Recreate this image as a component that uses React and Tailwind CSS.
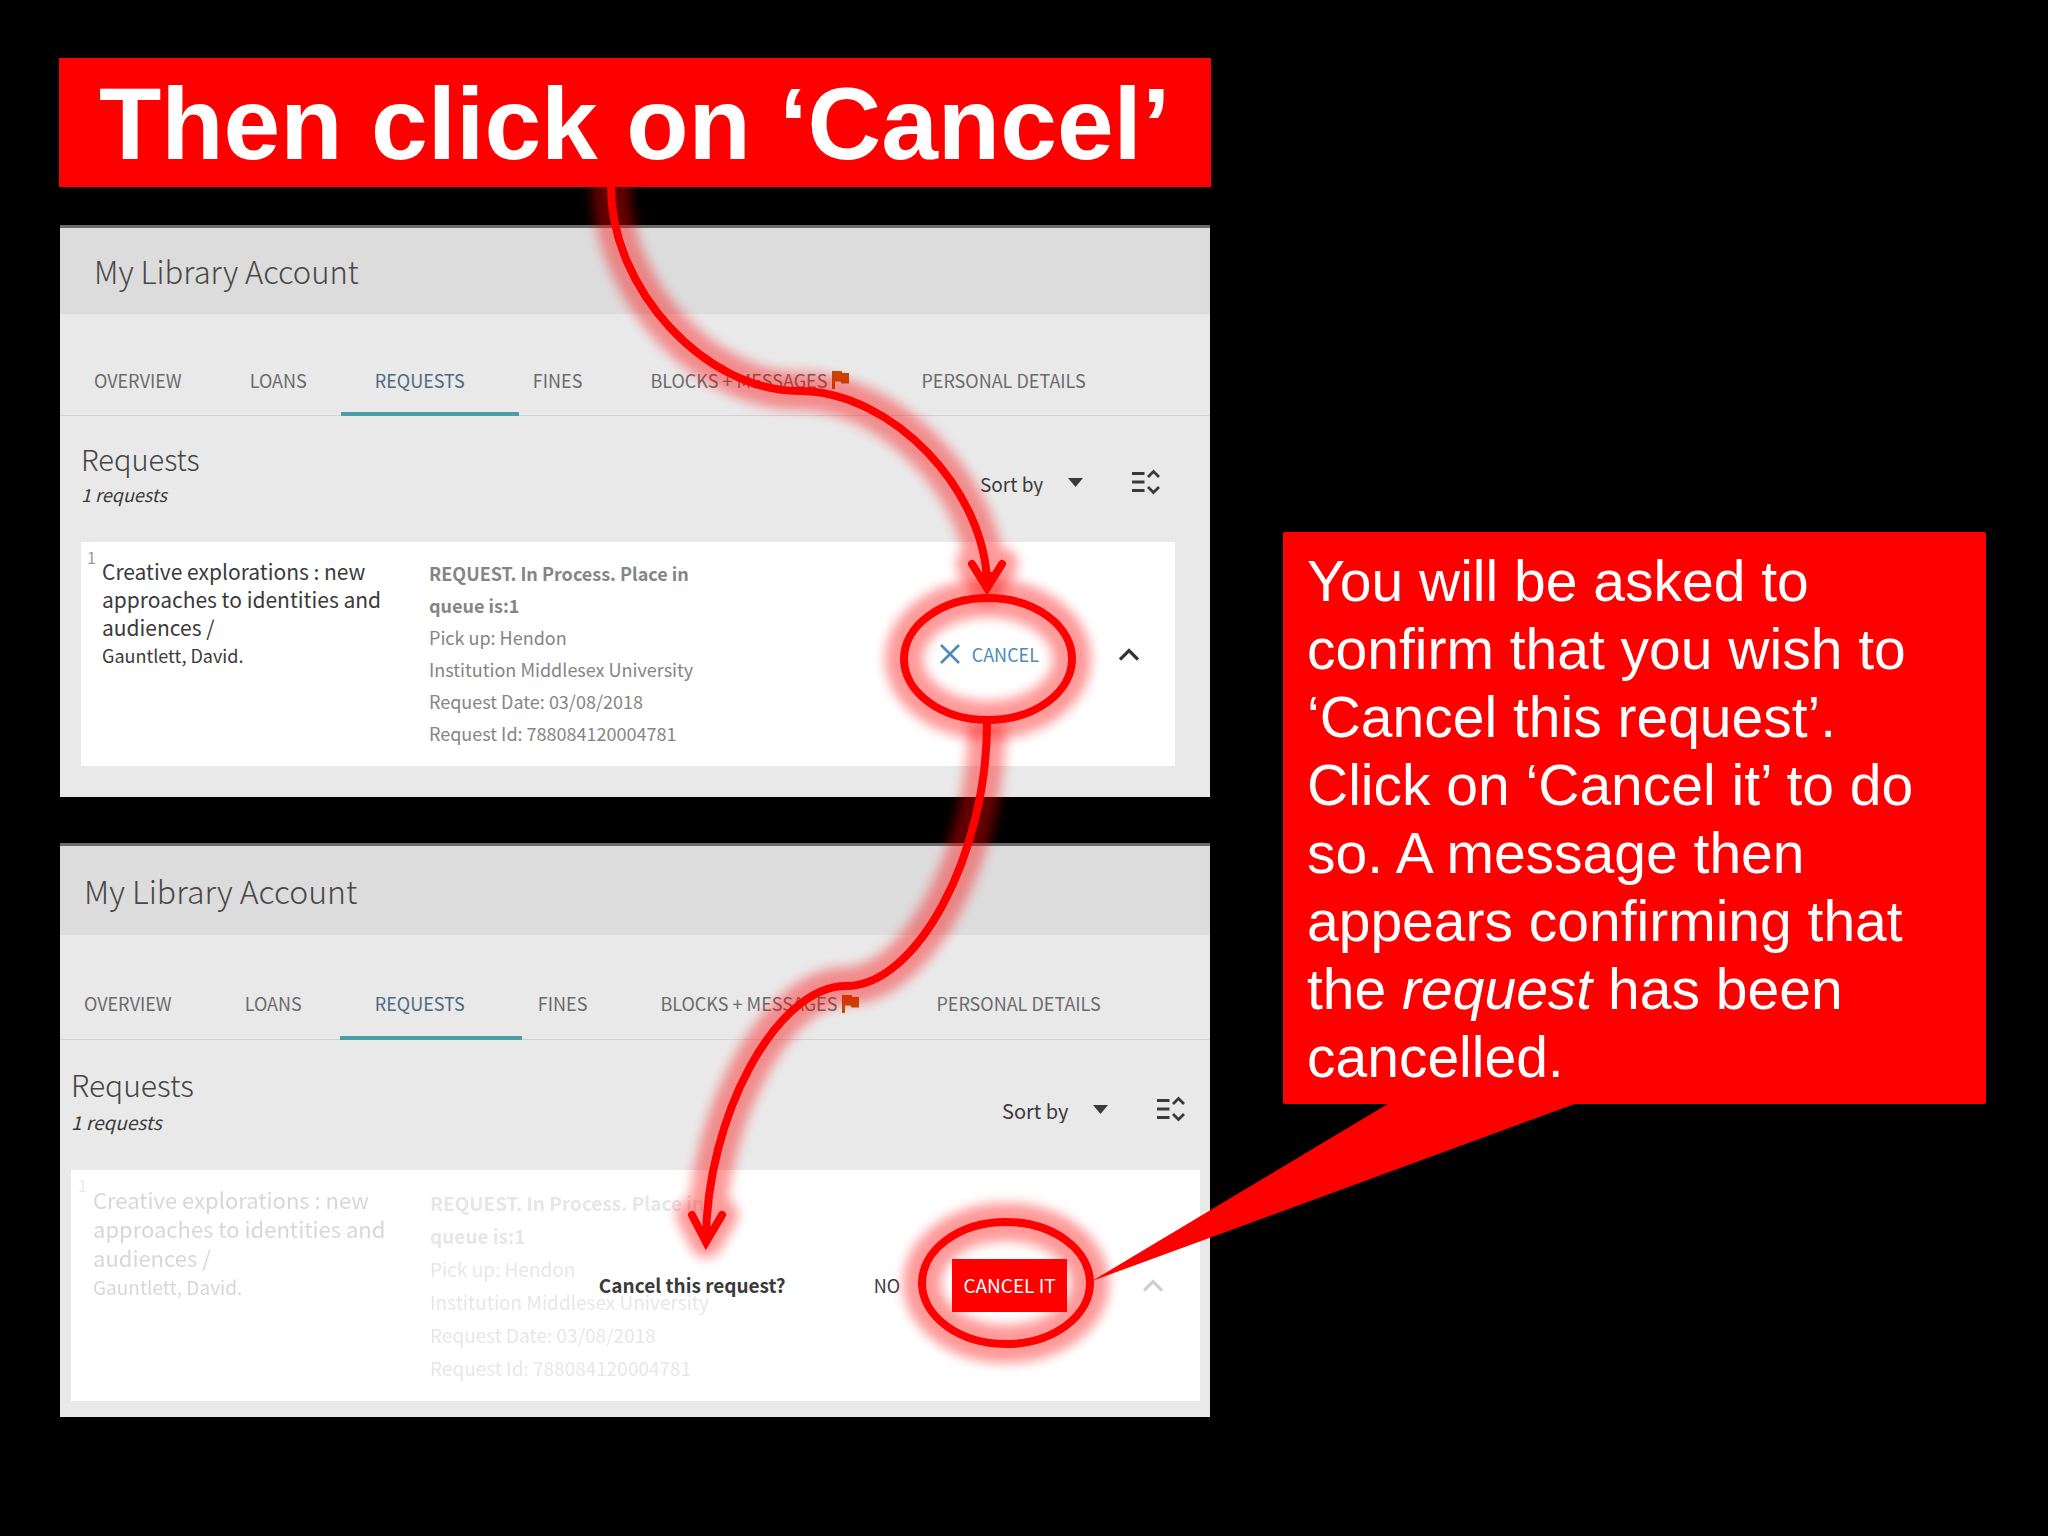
import React from "react";

const TABS = ["OVERVIEW", "LOANS", "REQUESTS", "FINES", "BLOCKS + MESSAGES", "PERSONAL DETAILS"];

const SIZES = {
  first: {
    heading: "h-[86px] pl-[34px] text-[31px]",
    tabs: "gap-[68px] pl-[34px] pt-[52px] pb-[21px] text-[18px] leading-[28px]",
    underline: "-left-[34px] -right-[54px] -bottom-[22px]",
    list: "pl-[21px] pr-[35px] pt-6 pb-[31px]",
    title: "text-[29px] leading-[36px]",
    count: "text-[18px] leading-[36px]",
    sort: "text-[19px]",
    card: "pl-[21px] pb-[17px]",
    index: "left-[6px]",
    book: "w-[327px] pt-[15px] text-[21px] leading-[28px]",
    author: "text-[18px]",
    details: "pt-[15px] text-[18px] leading-[32px]",
  },
  second: {
    heading: "h-[89px] pl-6 pb-px text-[32px]",
    tabs: "gap-[73px] pl-6 pt-[54px] pb-[21px] text-[18px] leading-[29px]",
    underline: "-left-[35px] -right-[57px] -bottom-[22px]",
    list: "pl-[11px] pr-[10px] pt-[26px] pb-4",
    title: "text-[30px] leading-[37px]",
    count: "text-[19px] leading-[37px]",
    sort: "text-[20px]",
    card: "pl-[22px] pb-[17px]",
    index: "left-[7px]",
    book: "w-[337px] pt-[15px] text-[22px] leading-[29px]",
    author: "text-[19px]",
    details: "pt-4 text-[19px] leading-[33px]",
  },
};

function FlagIcon() {
  return (
    <svg viewBox="0 0 21 18" className="h-[18px] w-[21px]" aria-hidden="true">
      <path d="M0 0h9.500l1 2H17v10.500H9.500l-1-2H3V18H0z" fill="#c04f06" />
    </svg>
  );
}

function ExpandAllIcon() {
  return (
    <svg viewBox="0 0 28 26" className="h-[26px] w-7" fill="none" stroke="#3a3a3c" strokeWidth="2.800" aria-hidden="true">
      <path d="M0 4.500h12.500M0 13h12.500M0 21.500h12.500M16 8l5.500-5.500L27 8M16 18l5.500 5.500L27 18" />
    </svg>
  );
}

function ChevronUp({ color }) {
  return (
    <svg viewBox="0 0 20 13" className="h-[13px] w-5" fill="none" stroke={color} strokeWidth="3.200" aria-hidden="true">
      <path d="M1 11.500 10 2.500l9 9" />
    </svg>
  );
}

function AccountPanel({ size, faded, children }) {
  const s = SIZES[size];
  return (
    <section className="border-t-[3px] border-[#6c6b6d] bg-[#eae9ea] text-[#3a3a3a]">
      <h2 className={`flex items-center bg-[#dddcdd] font-light text-[#484848] ${s.heading}`}>My Library Account</h2>
      <nav className={`flex border-b border-[#d3d1d3] whitespace-nowrap text-[#6b6b6b] ${s.tabs}`}>
        {TABS.map((tab) => (
          <button
            key={tab}
            type="button"
            className={`relative flex items-center gap-[5px] ${tab === "REQUESTS" ? "text-[#4d6b80]" : ""}`}
          >
            {tab}
            {tab.startsWith("BLOCKS") && <FlagIcon />}
            {tab === "REQUESTS" && <span className={`absolute h-1 bg-[#4a9fa6] ${s.underline}`} />}
          </button>
        ))}
      </nav>
      <div className={s.list}>
        <div className="mb-[30px] flex items-center justify-between">
          <div>
            <h3 className={`font-light text-[#444] ${s.title}`}>Requests</h3>
            <p className={`italic ${s.count}`}>1 requests</p>
          </div>
          <div className="mr-[15px] flex items-center gap-[49px] pt-3">
            <label className="flex items-center gap-6">
              <select aria-label="Sort by" className={`appearance-none pt-1 leading-6 ${s.sort}`}>
                <option>Sort by</option>
              </select>
              <svg viewBox="0 0 15 9" className="h-[9px] w-[15px]" aria-hidden="true">
                <path d="M0 0h15L7.500 9z" fill="#3a3a3c" />
              </svg>
            </label>
            <button type="button" aria-label="Expand all">
              <ExpandAllIcon />
            </button>
          </div>
        </div>
        <article className={`relative flex bg-white ${s.card}`}>
          <div className={`flex ${faded ? "opacity-20" : ""}`}>
            <span className={`absolute top-[3px] text-[16px] leading-6 text-[#9a9a9a] ${s.index}`}>1</span>
            <div className={`whitespace-nowrap ${s.book}`}>
              <h4>
                Creative explorations : new
                <br />
                approaches to identities and
                <br />
                audiences /
              </h4>
              <p className={s.author}>Gauntlett, David.</p>
            </div>
            <div className={`whitespace-nowrap text-[#858585] ${s.details}`}>
              <p className="font-bold">
                REQUEST. In Process. Place in
                <br />
                queue is:1
              </p>
              <p>Pick up: Hendon</p>
              <p>Institution Middlesex University</p>
              <p>Request Date: 03/08/2018</p>
              <p>Request Id: 788084120004781</p>
            </div>
          </div>
          {children}
        </article>
      </div>
    </section>
  );
}

const ARROWS = [
  {
    line: "M611 180V187C611 289 705 391 799 391C893 391 987 492 987 586",
    head: "M972 564 987 588 1002 564",
    tip: "M978 572 987 592 996 572z",
  },
  {
    line: "M987 723C987 855 917 986 846 986C776 986 706 1118 706 1241",
    head: "M692 1215 706 1242 722 1215",
    tip: "M698 1226 706 1247 715 1226z",
  },
];

const RINGS = [
  { cx: 988, cy: 659 },
  { cx: 1006, cy: 1283 },
];

function Annotations() {
  return (
    <svg
      viewBox="0 0 2048 1536"
      className="pointer-events-none absolute top-0 left-0 w-full"
      fill="none"
      stroke="#fe0000"
      aria-hidden="true"
    >
      {ARROWS.map((a) => (
        <g key={a.line} className="opacity-40 blur-[6px]" strokeLinejoin="round">
          <path d={a.line} strokeWidth="38" />
          <path d={a.head} strokeWidth="32" strokeLinecap="round" />
        </g>
      ))}
      {RINGS.map((r) => (
        <ellipse key={r.cy} cx={r.cx} cy={r.cy} rx="84" ry="61" strokeWidth="38" className="opacity-40 blur-[6px]" />
      ))}
      {ARROWS.map((a) => (
        <g key={a.line} strokeWidth="8">
          <path d={a.line} />
          <path d={a.head} strokeLinecap="round" />
          <path d={a.tip} fill="#fe0000" stroke="none" />
        </g>
      ))}
      {RINGS.map((r) => (
        <ellipse key={r.cy} cx={r.cx} cy={r.cy} rx="84" ry="61" strokeWidth="8" />
      ))}
      <path d="M1391 1102 1092 1281 1580 1102z" fill="#fe0000" stroke="none" />
    </svg>
  );
}

export default function App() {
  return (
    <main className="relative min-h-screen bg-black font-['Noto_Sans_CJK_SC',sans-serif]">
      <div className="grid grid-cols-[1152fr_703fr] gap-[72px] pt-[58px] pr-[62px] pl-[59px]">
        <div>
          <h1 className="relative z-10 mb-[38px] bg-[#fe0000] pt-1 pl-10 font-['Liberation_Sans',sans-serif] text-[102px] leading-[125px] font-bold whitespace-nowrap text-white">
            Then click on ‘Cancel’
          </h1>
          <div className="mx-px flex flex-col gap-[46px]">
            <AccountPanel size="first">
              <div className="absolute inset-y-0 right-9 flex items-center gap-20">
                <button type="button" className="flex items-center gap-3 text-[18px] text-[#4f8ab8]">
                  <svg viewBox="0 0 20 20" className="size-5" fill="none" stroke="currentColor" strokeWidth="2.600" aria-hidden="true">
                    <path d="M1 1l18 18M19 1 1 19" />
                  </svg>
                  CANCEL
                </button>
                <button type="button" aria-label="Collapse">
                  <ChevronUp color="#333" />
                </button>
              </div>
            </AccountPanel>
            <AccountPanel size="second" faded>
              <div className="absolute inset-y-0 right-[37px] flex items-center">
                <p className="mr-[88px] text-[19px] font-bold">Cancel this request?</p>
                <button type="button" className="mr-[52px] text-[18px]">
                  NO
                </button>
                <button type="button" className="relative z-10 mr-[76px] h-[53px] w-[115px] bg-[#fe0000] text-[19px] text-white">
                  CANCEL IT
                </button>
                <button type="button" aria-label="Collapse">
                  <ChevronUp color="#d0d0d0" />
                </button>
              </div>
            </AccountPanel>
          </div>
        </div>
        <aside className="mt-[474px] self-start rounded-[2px] bg-[#fe0000] pt-[15px] pb-[13px] pl-6 font-['Liberation_Sans',sans-serif] text-[57px] leading-[68px] text-white">
          <p className="max-w-[640px]">
            You will be asked to confirm that you wish to ‘Cancel this request’. Click on ‘Cancel it’ to do so. A message
            then appears confirming that the <em>request</em> has been cancelled.
          </p>
        </aside>
      </div>
      <Annotations />
    </main>
  );
}
